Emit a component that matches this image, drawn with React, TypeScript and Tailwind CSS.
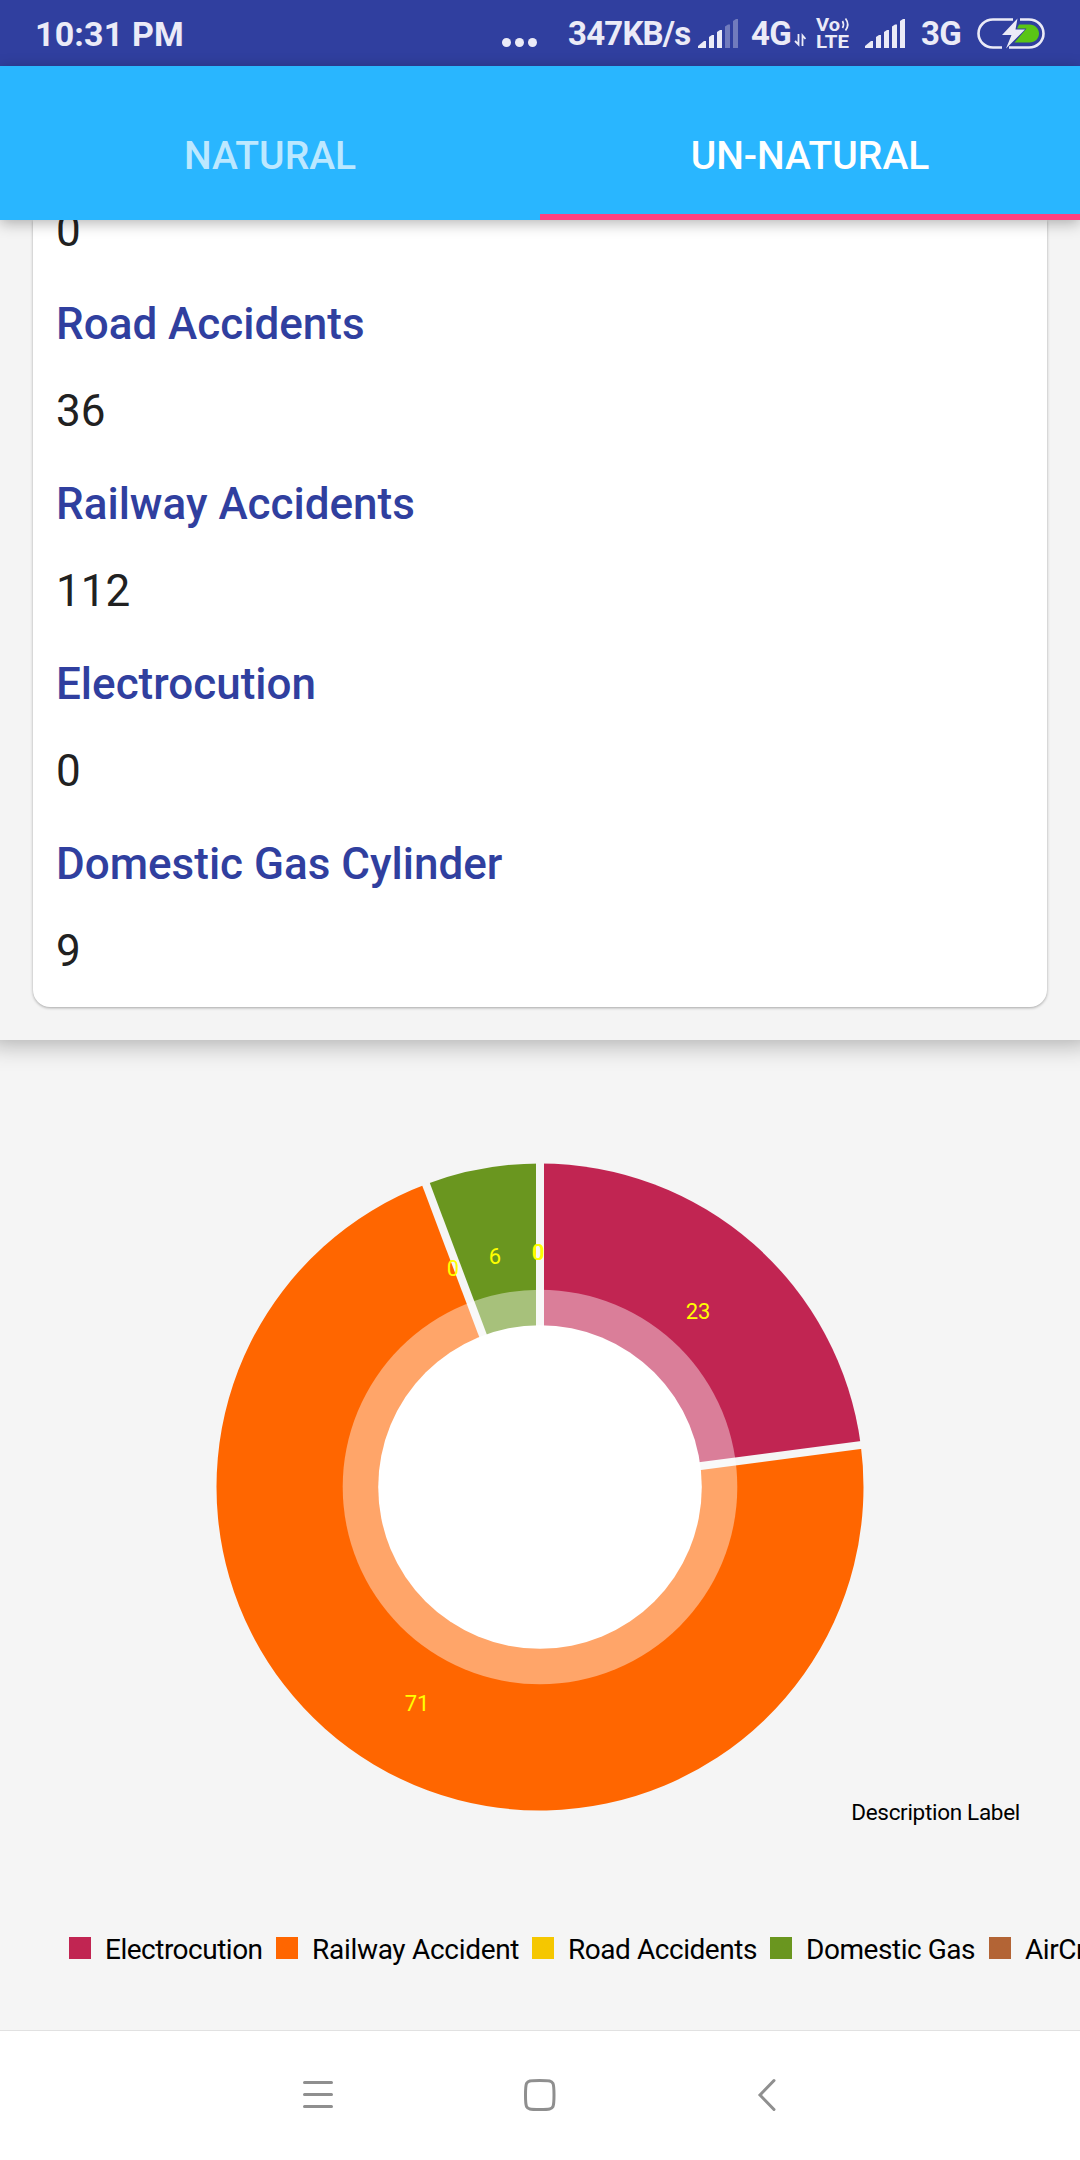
const causes = [
  { label: "Road Accidents", value: 36 },
  { label: "Railway Accidents", value: 112 },
  { label: "Electrocution", value: 0 },
  { label: "Domestic Gas Cylinder", value: 9 },
];

const legend = [
  { label: "Electrocution", swatch: "bg-[#c12552]", cell: "w-[207px] tracking-[-0.5px]" },
  { label: "Railway Accident", swatch: "bg-[#ff6600]", cell: "w-[256px] tracking-[-0.3px]" },
  { label: "Road Accidents", swatch: "bg-[#f5c700]", cell: "w-[238px] tracking-[-0.45px]" },
  { label: "Domestic Gas", swatch: "bg-[#6a961f]", cell: "w-[219px] tracking-[-0.45px]" },
  { label: "AirCrash", swatch: "bg-[#b36435]", cell: "w-[219px] tracking-[-0.45px]" },
];

const slices = [
  { value: 36, color: "#c12552" },
  { value: 112, color: "#ff6600" },
  { value: 9, color: "#6a961f" },
];

const CX = 540;
const CY = 447;
const R = 323.5;

function rim(fraction: number, radius: number) {
  const a = fraction * 2 * Math.PI;
  return [CX + radius * Math.sin(a), CY - radius * Math.cos(a)];
}

function SignalBars({ strength }: { strength: number }) {
  const tops = [22, 16, 11, 5.5, 0];
  return (
    <svg width="41" height="29" viewBox="0 0 41 29" fill="#ebebf7">
      {tops.map((t, i) => (
        <path
          key={i}
          opacity={i < strength ? 1 : 0.35}
          d={i === 0 ? "M0 29V27L6 22H8V29Z" : `M${i * 8 + 3} 29V${t + 2}L${i * 8 + 6} ${t}H${i * 8 + 8}V29Z`}
        />
      ))}
    </svg>
  );
}

function StatusBar() {
  return (
    <div className="flex h-[66px] items-center bg-[#303f9f] pl-[35px] text-[33px] leading-[66px] font-bold tracking-[-0.8px] text-[#ebebf7]">
      <span className="w-[467px] pt-[2px] text-[34px] tracking-[0.15px] whitespace-nowrap">10:31 PM</span>
      <svg width="36" height="9" viewBox="0 0 36 9" className="mt-[19px]" fill="#ebebf7">
        <circle cx="4.500" cy="4.500" r="4.500" />
        <circle cx="17.500" cy="4.500" r="4.500" />
        <circle cx="30.500" cy="4.500" r="4.500" />
      </svg>
      <span className="ml-[30px] w-[130px] pt-[2px] whitespace-nowrap">347KB/s</span>
      <SignalBars strength={3} />
      <span className="ml-[12px] w-[43px] pt-[2px] whitespace-nowrap">4G</span>
      <svg width="12" height="14" viewBox="0 0 12 14" className="mt-[14px]" fill="none" stroke="#ebebf7" strokeWidth="1.8">
        <path d="M4.500 1V11.500L1 8" />
        <path d="M8.500 13V2.500L11.500 6" />
      </svg>
      <svg width="34" height="32" viewBox="0 0 34 32" className="ml-[10px] overflow-visible tracking-normal" fill="#ebebf7">
        <text x="0" y="13.500" fontSize="18.500" textLength="24" lengthAdjust="spacingAndGlyphs">Vo</text>
        <path d="M26.500 4Q28.500 7.500 26.500 11M29.500 1.500Q34 7.500 29.500 13.500" fill="none" stroke="#ebebf7" strokeWidth="1.700" />
        <text x="0" y="30.500" fontSize="17.500" textLength="33" lengthAdjust="spacingAndGlyphs">LTE</text>
      </svg>
      <div className="ml-[15px] flex">
        <SignalBars strength={5} />
      </div>
      <span className="ml-[15px] w-[56px] pt-[2px] whitespace-nowrap">3G</span>
      <svg width="68" height="32" viewBox="0 0 68 32" fill="none">
        <path d="M36 2.500H16C8 2.500 1.500 8.500 1.500 16.500S8 30.500 16 30.500H25M43 2.500H52C60 2.500 66.500 8.500 66.500 16.500S60 30.500 52 30.500H32" stroke="#ebebf7" strokeWidth="2.600" />
        <path d="M42 7.500H52.500C58 7.500 62 11.500 62 16.500S58 25.500 52.500 25.500H37.500L49.500 11.500H40Z" fill="#5ac515" />
        <path d="M40.500 1.500L25 18H34.500L29 31.500L48 12.500H38.500Z" fill="#ebebf7" />
      </svg>
    </div>
  );
}

function Tabs() {
  return (
    <div className="relative z-10 flex h-[154px] bg-[#29b6ff] text-[39px] leading-[130px] font-medium text-white shadow-[0_3px_14px_rgba(0,0,0,0.3)]">
      <div className="flex-1 pt-[25px] text-center text-white/70">NATURAL</div>
      <div className="flex-1 border-b-[6px] border-[#ff4081] pt-[25px] text-center">UN-NATURAL</div>
    </div>
  );
}

function DonutChart() {
  const total = slices.reduce((sum, s) => sum + s.value, 0);
  let run = 0;
  const wedges = slices.map((s) => {
    const from = run / total;
    run += s.value;
    return { ...s, from, to: run / total };
  });
  return (
    <svg width="1080" height="860" viewBox="0 0 1080 860" className="block shrink-0">
      {wedges.map((w) => {
        const [x0, y0] = rim(w.from, R);
        const [x1, y1] = rim(w.to, R);
        const large = w.to - w.from > 0.5 ? 1 : 0;
        return <path key={w.color} d={`M${CX} ${CY}L${x0} ${y0}A${R} ${R} 0 ${large} 1 ${x1} ${y1}Z`} fill={w.color} />;
      })}
      {wedges.map((w) => {
        const [x, y] = rim(w.from, R + 3);
        return <line key={w.color} x1={CX} y1={CY} x2={x} y2={y} stroke="#f5f5f5" strokeWidth="8" />;
      })}
      <circle cx={CX} cy={CY} r="197.300" fill="#fff" fillOpacity="0.41" />
      <circle cx={CX} cy={CY} r="161.800" fill="#fff" />
      <g fill="#ffff00" fontSize="22" textAnchor="middle">
        <text x="698" y="279">23</text>
        <text x="417" y="671">71</text>
        <text x="453" y="236">0</text>
        <text x="495" y="224">6</text>
        <text x="537.800" y="220">0</text>
        <text x="538.600" y="220">0</text>
      </g>
      <text x="1020" y="780" fontSize="22.500" textAnchor="end" fill="#000" className="tracking-[-0.3px]">Description Label</text>
    </svg>
  );
}

export default function App() {
  return (
    <div className="flex h-[2160px] w-[1080px] flex-col overflow-hidden bg-[#f5f5f5] font-['Roboto',sans-serif]">
      <StatusBar />
      <Tabs />
      <section className="relative h-[820px] shrink-0 bg-[#f4f4f4] px-[33px] shadow-[0_-8px_24px_12px_rgba(0,0,0,0.3)]">
        <div className="h-[787px] overflow-hidden rounded-b-[17px] bg-white px-[23px] text-[44px] text-[#212121] shadow-[0_1px_3px_rgba(0,0,0,0.32)]">
          <p className="-mt-[34px] mb-[6px] leading-[90px]">0</p>
          {causes.map((c) => (
            <div key={c.label} className="mb-[6px]">
              <h2 className="leading-[84px] font-medium text-[#303f9f]">{c.label}</h2>
              <p className="leading-[90px]">{c.value}</p>
            </div>
          ))}
        </div>
      </section>
      <DonutChart />
      <div className="flex h-[130px] shrink-0 items-start overflow-hidden pt-[28px] pl-[69px]">
        {legend.map((l) => (
          <div key={l.label} className={`flex h-[40px] shrink-0 items-center ${l.cell}`}>
            <span className={`mr-[14px] h-[22px] w-[22px] shrink-0 ${l.swatch}`} />
            <span className="pt-[3px] text-[28px] whitespace-nowrap text-black">{l.label}</span>
          </div>
        ))}
      </div>
      <nav className="flex h-[130px] shrink-0 border-t border-[#e1e1e1] bg-white pt-[47px] pl-[302px]">
        <svg width="32" height="36" viewBox="0 0 32 36" stroke="#8f8f8f" strokeWidth="3" strokeLinecap="round" fill="none">
          <path d="M2.500 4.500H29.500M2.500 16.500H29.500M2.500 28.500H29.500" />
        </svg>
        <svg width="36" height="36" viewBox="0 0 36 36" className="ml-[188px]" stroke="#8f8f8f" strokeWidth="3" fill="none">
          <path d="M17.700 2.500C28 2.500 29.500 2.800 31 5.500C32 8 32 10 32 17S32 26 31 28.500C29.500 31.200 28 31.500 17.700 31.500S6 31.200 4.500 28.500C3.500 26 3.500 24 3.500 17S3.500 8 4.500 5.500C6 2.800 7.500 2.500 17.700 2.500Z" />
        </svg>
        <svg width="22" height="36" viewBox="0 0 22 36" className="ml-[198px]" stroke="#8f8f8f" strokeWidth="3" strokeLinecap="round" fill="none">
          <path d="M18 2.500L4 17L18 31.500" />
        </svg>
      </nav>
    </div>
  );
}
